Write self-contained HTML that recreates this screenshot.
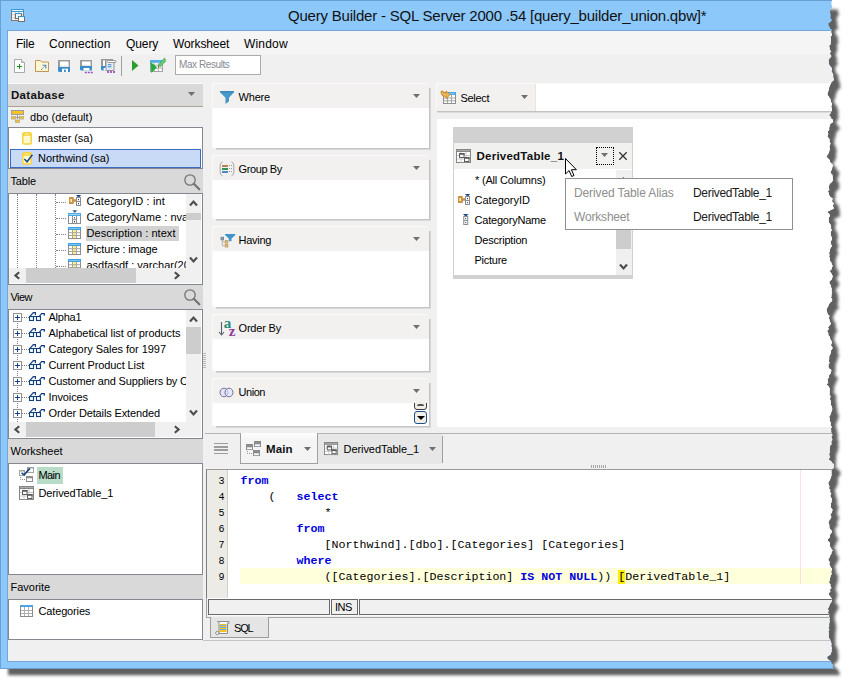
<!DOCTYPE html>
<html lang="en">
<head>
<meta charset="utf-8">
<title>Query Builder - SQL Server 2000 .54 [query_builder_union.qbw]*</title>
<style>
*{box-sizing:border-box;margin:0;padding:0}
html,body{width:849px;height:684px;background:#fff;overflow:hidden}
body{position:relative;font-family:"Liberation Sans",sans-serif;font-size:11px;color:#000;line-height:1}
.abs,.abs *{position:absolute}
#shadow{position:absolute;left:0;top:0;width:849px;height:684px;z-index:0}
#win{position:absolute;left:0;top:0;width:849px;height:684px;z-index:1;clip-path:polygon(0px 0px,832px 0px,831.6px 2.0px,831.2px 4.0px,832.3px 6.0px,832px 8px,830.1px 10.0px,830px 12px,830.6px 14.0px,830.7px 16.0px,830.5px 18.0px,832px 20px,830.8px 21.7px,828.6px 23.3px,828.5px 25px,829.5px 26.7px,829.9px 28.3px,832px 30px,830.9px 31.7px,831.5px 33.3px,832.2px 35.0px,830.5px 36.7px,830.6px 38.3px,831px 40px,830.6px 42.0px,830.7px 44.0px,829px 46px,829.6px 47.8px,829.6px 49.6px,831.2px 51.4px,829.6px 53.2px,831px 55px,831.3px 56.8px,829.5px 58.5px,828.7px 60.2px,829px 62px,828.9px 64.0px,830.1px 66.0px,831.9px 68.0px,832px 70px,831.6px 71.7px,832.8px 73.3px,833.3px 75.0px,833.1px 76.7px,833.8px 78.3px,834px 80px,831.8px 82.0px,830.5px 84.0px,829.6px 86.0px,829px 88px,829.0px 89.8px,828.1px 91.5px,827.5px 93.2px,827.5px 95px,828.9px 96.7px,829.7px 98.3px,831px 100px,830.7px 101.7px,832.0px 103.3px,831.9px 105.0px,831.1px 106.7px,832.0px 108.3px,832px 110px,831.1px 111.7px,830.8px 113.3px,829px 115px,830.8px 116.7px,831.2px 118.3px,833px 120px,833.1px 122.0px,830.2px 124.0px,829.8px 126.0px,829px 128px,829.3px 129.8px,827.7px 131.5px,828.2px 133.2px,828px 135px,827.3px 136.7px,829.0px 138.3px,829.6px 140.0px,829.5px 141.7px,830.5px 143.3px,830px 145px,829.3px 146.8px,829.9px 148.5px,829.5px 150.2px,829px 152px,828.3px 153.7px,827.2px 155.3px,826.5px 157px,828.4px 158.7px,829.8px 160.3px,830px 162px,833px 165px,832.3px 167.0px,832.0px 169.0px,831px 171px,830.5px 172.9px,832.3px 174.8px,832.6px 176.6px,832.7px 178.5px,832.9px 180.4px,831.6px 182.2px,829.5px 184.1px,829px 186px,828.7px 187.8px,829.4px 189.6px,827.9px 191.4px,828.9px 193.2px,829px 195px,830.1px 196.8px,832.7px 198.5px,832.1px 200.2px,832.2px 201.8px,833.9px 203.5px,832.8px 205.2px,833.2px 206.8px,834px 208.5px,830.3px 210.2px,827px 212px,829.3px 214.0px,830px 216px,828.6px 217.7px,828.9px 219.3px,828.5px 221px,829.2px 222.9px,830.6px 224.8px,831.1px 226.6px,831px 228.5px,831.8px 230.3px,830.5px 232.1px,830.8px 233.9px,830.7px 235.6px,831.8px 237.4px,832.0px 239.2px,831px 241px,830.6px 242.7px,831.0px 244.3px,832px 246px,830.7px 247.8px,829.9px 249.5px,829.7px 251.2px,829px 253px,829.5px 254.8px,829.1px 256.7px,830px 258.5px,829.6px 260.4px,831.2px 262.2px,831.7px 264.1px,832.7px 266px,831.8px 267.7px,831.6px 269.3px,829.5px 271px,831.0px 272.7px,831.7px 274.3px,832.7px 276px,832.2px 277.9px,831.5px 279.8px,829.3px 281.6px,829.5px 283.5px,830.9px 285.4px,831.1px 287.2px,831.8px 289.1px,831.5px 291px,832.2px 292.7px,831.4px 294.3px,831.5px 296.0px,831.0px 297.7px,832.2px 299.3px,832px 301px,829.9px 302.8px,828.8px 304.6px,828.1px 306.4px,826.9px 308.2px,826.5px 310px,827.1px 312.0px,827.5px 314.0px,829.5px 316px,828.8px 317.9px,829.5px 319.8px,829.7px 321.6px,831px 323.5px,829.7px 325.4px,828.0px 327.2px,828.8px 329.1px,827px 331px,828.3px 333.0px,828.2px 335.0px,830px 337px,830.1px 338.7px,831.0px 340.3px,832px 342px,831.5px 343.7px,830.8px 345.3px,832.3px 347.0px,832.4px 348.7px,831.1px 350.3px,831px 352px,830.6px 353.8px,829.4px 355.6px,829.1px 357.4px,829.2px 359.1px,828.7px 360.9px,829.6px 362.7px,828.5px 364.5px,828.4px 366.4px,828.7px 368.2px,831.4px 370.1px,831px 372px,830.4px 373.8px,828.9px 375.6px,829.2px 377.4px,827.4px 379.1px,827.8px 380.9px,828.2px 382.7px,826.5px 384.5px,828.5px 386.2px,829.3px 387.8px,830px 389.5px,829.5px 391.2px,829.7px 392.8px,829.3px 394.5px,830.6px 396.2px,830.1px 397.8px,830px 399.5px,831.1px 401.4px,830.6px 403.2px,830.9px 405.1px,832px 407px,832.2px 408.7px,832.1px 410.3px,831.3px 412.0px,830.7px 413.7px,830.2px 415.3px,829px 417px,830.0px 418.7px,829.4px 420.3px,830.5px 422.0px,830.7px 423.7px,830.5px 425.3px,832px 427px,830.9px 428.7px,831.3px 430.3px,831.1px 432.0px,832.0px 433.7px,832.4px 435.3px,831.2px 437.0px,832.2px 438.7px,832.2px 440.3px,831px 442px,831.8px 443.7px,830.4px 445.3px,829.9px 447.0px,829.7px 448.7px,829.5px 450.3px,830px 452px,829.0px 453.9px,829.5px 455.8px,829.8px 457.6px,828.5px 459.5px,831.1px 461.2px,832.1px 462.8px,834px 464.5px,833.7px 466.4px,833.4px 468.2px,831.2px 470.1px,831.5px 472px,831.4px 473.8px,831.5px 475.6px,830.8px 477.4px,830.3px 479.1px,829.3px 480.9px,828.2px 482.7px,828.5px 484.5px,829.5px 486.4px,828.9px 488.2px,830.3px 490.1px,830px 492px,831.3px 493.7px,830.3px 495.3px,830.5px 497.0px,832.0px 498.7px,831.7px 500.3px,831.5px 502px,830.8px 503.8px,830.7px 505.7px,830.7px 507.5px,832.4px 509.3px,832.2px 511.2px,831.5px 513px,830.2px 514.7px,831.2px 516.3px,831.1px 518.0px,829.8px 519.7px,828.7px 521.3px,828.5px 523px,829.4px 524.9px,829.2px 526.8px,829.7px 528.6px,831.5px 530.5px,831.9px 532.2px,830.6px 533.8px,829.7px 535.5px,829.9px 537.2px,828.2px 538.8px,827.7px 540.5px,829.4px 542.2px,830.1px 543.8px,829.6px 545.5px,830.5px 547.2px,831.4px 548.8px,832.7px 550.5px,831.4px 552.2px,831.5px 553.8px,830.1px 555.5px,829.7px 557.2px,828.4px 558.8px,828.5px 560.5px,829.9px 562.2px,829.2px 563.8px,829.9px 565.5px,830.7px 567.2px,831.9px 568.8px,831.5px 570.5px,831.0px 572.2px,831.8px 573.8px,830.5px 575.5px,830.2px 577.2px,829.9px 578.8px,829.5px 580.5px,828.9px 582.4px,830.4px 584.2px,830.3px 586.1px,831.5px 588px,829.6px 589.7px,830.5px 591.3px,829px 593px,829.0px 594.9px,830.4px 596.8px,831.7px 598.6px,832px 600.5px,831.3px 602.2px,829.9px 603.9px,829.5px 605.6px,828.7px 607.3px,827.7px 609px,828.8px 610.8px,827.8px 612.6px,829.2px 614.4px,829.0px 616.2px,830px 618px,829.3px 619.7px,830.1px 621.3px,829.3px 623.0px,829.1px 624.7px,829.3px 626.3px,828.5px 628px,829.5px 629.7px,828.5px 631.3px,829.0px 633.0px,828.8px 634.7px,828.9px 636.3px,829px 638px,830.3px 639.7px,830.6px 641.3px,831.5px 643px,831.5px 644.7px,831.3px 646.3px,832.2px 648.0px,831.6px 649.7px,831.9px 651.3px,831px 653px,830.6px 654.7px,827.8px 656.3px,827px 658px,828.6px 659.7px,831.0px 661.3px,831.5px 663px,833.2px 665.0px,832.7px 667.0px,834.5px 669px,0px 669px)}
#win div,#win span,#win svg{position:absolute}
.t{white-space:pre;line-height:14px;height:14px}
.hdr{background:#d9d9d9;left:8px;width:195px}
.box{background:#fff;border:1px solid #828790;left:8px;width:195px}
.card{background:#fff;border-radius:3px 3px 0 0;box-shadow:-1px -1px 0 #fafafa}
.card::before{content:"";position:absolute;left:100%;top:4px;width:2px;bottom:-2px;background:linear-gradient(90deg,#c4c4c4 50%,#d8d8d8 50%)}
.card::after{content:"";position:absolute;left:3px;right:-1px;top:100%;height:2px;background:linear-gradient(#c4c4c4 50%,#d8d8d8 50%)}
.card .ch{left:0;top:0;right:0;height:24px;background:#f2f1ef;border-radius:3px 3px 0 0}
.tri{width:7px;height:4px;background:#6f6f6f;clip-path:polygon(0 0,100% 0,50% 100%)}
.code{font-family:"Liberation Mono",monospace;font-size:11.67px;white-space:pre;line-height:16px;height:16px;color:#000}
.kw{position:static!important;color:#0000e0;font-weight:bold}
.ln{font-family:"Liberation Mono",monospace;font-size:10px;line-height:16px;height:16px;left:207px;width:17.5px;text-align:right;color:#000;margin-top:1px}
</style>
</head>
<body>
<svg id="shadow" width="849" height="684" viewBox="0 0 849 684">
<defs><g id="keyic"><path d="M8 1h5.200l-2.600 2.700z" fill="#1c4587"/><rect x="8.500" y="3.500" width="4" height="8" fill="#fff" stroke="#8a8a8a"/><path d="M8.500 7.500h4" stroke="#8a8a8a"/><rect x="10" y="5" width="1" height="1.200" fill="#1c4587"/><rect x="10" y="9" width="1" height="1.200" fill="#1c4587"/><path d="M1.500 3h4.200v2.200h2.300v2.600h-2.300v2.200h-4.200q-.5 0-.5-.5v-6q0-.5.500-.5z" fill="#c8923f"/><rect x="2.400" y="5" width="1.500" height="3" fill="#fff3d6"/></g><g id="glasses" fill="none" stroke="#123e7c" stroke-width="1.1"><rect x="0.5" y="4.5" width="4" height="4" fill="#f4fbff"/><rect x="7.500" y="4.500" width="4" height="4" fill="#f4fbff"/><path d="M4.500 4.500h3"/><path d="M1 4.300l3.300-3.600h2.100v2.200" stroke-width="1.200"/><path d="M10.300 4.300l2.200-2.700h2.800v2.200" stroke-width="1.200"/></g>
<g id="mainic"><rect x="0.500" y="3.500" width="5" height="5" fill="#fff" stroke="#a2a2a2"/><rect x="0" y="3" width="6" height="1.500" fill="#a2a2a2"/><rect x="8.500" y="0.500" width="6" height="5" fill="#fff" stroke="#a2a2a2"/><rect x="8" y="0" width="7" height="1.500" fill="#a2a2a2"/><path d="M2.600 5.800l2.600 2.100 5.600-6.500" fill="none" stroke="#1c4587" stroke-width="1.700"/><path d="M1.500 10v2.500h4.500" fill="none" stroke="#8e8e8e" stroke-dasharray="1 1"/><rect x="7.500" y="9.500" width="6" height="5" fill="#fff" stroke="#8e8e8e"/><rect x="7" y="9" width="7" height="2.300" fill="#8e8e8e"/></g>
<g id="dtic"><rect x="0.500" y="0.500" width="14" height="13" fill="#fff" stroke="#858585"/><rect x="0" y="0" width="15" height="3" fill="#858585"/><path d="M1 1.500h13" stroke="#b4b4b4" stroke-width="0.800"/><path d="M1 6.500h13M1 10h13M5 3v10.500M10 3v10.500" stroke="#c9c9c9" fill="none"/><rect x="3.500" y="4.500" width="4.500" height="4" fill="#fff" stroke="#5c5c5c"/><rect x="3" y="4" width="5.500" height="1.800" fill="#5c5c5c"/><rect x="8.500" y="8.500" width="4.500" height="4" fill="#fff" stroke="#5c5c5c"/><rect x="8" y="8" width="5.500" height="1.800" fill="#5c5c5c"/></g><g id="colic"><rect x="0.500" y="1.500" width="12" height="10" fill="#fff" stroke="#8d8d8d"/><rect x="0" y="0" width="13" height="3" fill="#3f9fdc"/><path d="M1 1.500h11" stroke="#86cbf3" stroke-width="0.900"/><rect x="5" y="3" width="3" height="8" fill="#ffee82"/><path d="M1 5.700h11M1 8.500h11M4.500 3v8M8.500 3v8" stroke="#a6a6a6" fill="none"/></g><filter id="bl" x="-5%" y="-5%" width="110%" height="110%"><feGaussianBlur stdDeviation="1.6"/></filter></defs>
<polygon points="8,8 838.1,9.5 837.7,11.5 838.8,13.5 838.5,15.5 836.6,17.5 836.5,19.5 837.1,21.5 837.2,23.5 837.0,25.5 838.5,27.5 837.3,29.2 835.1,30.8 835.0,32.5 836.0,34.2 836.4,35.8 838.5,37.5 837.4,39.2 838.0,40.8 838.7,42.5 837.0,44.2 837.1,45.8 837.5,47.5 837.1,49.5 837.2,51.5 835.5,53.5 836.1,55.3 836.1,57.1 837.7,58.9 836.1,60.7 837.5,62.5 837.8,64.3 836.0,66.0 835.2,67.7 835.5,69.5 835.4,71.5 836.6,73.5 838.4,75.5 838.5,77.5 838.1,79.2 839.3,80.8 839.8,82.5 839.6,84.2 840.3,85.8 840.5,87.5 838.3,89.5 837.0,91.5 836.1,93.5 835.5,95.5 835.5,97.3 834.6,99.0 834.0,100.7 834.0,102.5 835.4,104.2 836.2,105.8 837.5,107.5 837.2,109.2 838.5,110.8 838.4,112.5 837.6,114.2 838.5,115.8 838.5,117.5 837.6,119.2 837.3,120.8 835.5,122.5 837.3,124.2 837.7,125.8 839.5,127.5 839.6,129.5 836.7,131.5 836.3,133.5 835.5,135.5 835.8,137.3 834.2,139.0 834.7,140.7 834.5,142.5 833.8,144.2 835.5,145.8 836.1,147.5 836.0,149.2 837.0,150.8 836.5,152.5 835.8,154.3 836.4,156.0 836.0,157.7 835.5,159.5 834.8,161.2 833.7,162.8 833.0,164.5 834.9,166.2 836.3,167.8 836.5,169.5 839.5,172.5 838.8,174.5 838.5,176.5 837.5,178.5 837.0,180.4 838.8,182.3 839.1,184.1 839.2,186.0 839.4,187.9 838.1,189.7 836.0,191.6 835.5,193.5 835.2,195.3 835.9,197.1 834.4,198.9 835.4,200.7 835.5,202.5 836.6,204.3 839.2,206.0 838.6,207.7 838.7,209.3 840.4,211.0 839.3,212.7 839.7,214.3 840.5,216.0 836.8,217.7 833.5,219.5 835.8,221.5 836.5,223.5 835.1,225.2 835.4,226.8 835.0,228.5 835.7,230.4 837.1,232.3 837.6,234.1 837.5,236.0 838.3,237.8 837.0,239.6 837.3,241.4 837.2,243.1 838.3,244.9 838.5,246.7 837.5,248.5 837.1,250.2 837.5,251.8 838.5,253.5 837.2,255.3 836.4,257.0 836.2,258.7 835.5,260.5 836.0,262.3 835.6,264.2 836.5,266.0 836.1,267.9 837.7,269.7 838.2,271.6 839.2,273.5 838.3,275.2 838.1,276.8 836.0,278.5 837.5,280.2 838.2,281.8 839.2,283.5 838.7,285.4 838.0,287.3 835.8,289.1 836.0,291.0 837.4,292.9 837.6,294.7 838.3,296.6 838.0,298.5 838.7,300.2 837.9,301.8 838.0,303.5 837.5,305.2 838.7,306.8 838.5,308.5 836.4,310.3 835.3,312.1 834.6,313.9 833.4,315.7 833.0,317.5 833.6,319.5 834.0,321.5 836.0,323.5 835.3,325.4 836.0,327.3 836.2,329.1 837.5,331.0 836.2,332.9 834.5,334.7 835.3,336.6 833.5,338.5 834.8,340.5 834.7,342.5 836.5,344.5 836.6,346.2 837.5,347.8 838.5,349.5 838.0,351.2 837.3,352.8 838.8,354.5 838.9,356.2 837.6,357.8 837.5,359.5 837.1,361.3 835.9,363.1 835.6,364.9 835.7,366.6 835.2,368.4 836.1,370.2 835.0,372.0 834.9,373.9 835.2,375.7 837.9,377.6 837.5,379.5 836.9,381.3 835.4,383.1 835.7,384.9 833.9,386.6 834.3,388.4 834.7,390.2 833.0,392.0 835.0,393.7 835.8,395.3 836.5,397.0 836.0,398.7 836.2,400.3 835.8,402.0 837.1,403.7 836.6,405.3 836.5,407.0 837.6,408.9 837.1,410.7 837.4,412.6 838.5,414.5 838.7,416.2 838.6,417.8 837.8,419.5 837.2,421.2 836.7,422.8 835.5,424.5 836.5,426.2 835.9,427.8 837.0,429.5 837.2,431.2 837.0,432.8 838.5,434.5 837.4,436.2 837.8,437.8 837.6,439.5 838.5,441.2 838.9,442.8 837.7,444.5 838.7,446.2 838.7,447.8 837.5,449.5 838.3,451.2 836.9,452.8 836.4,454.5 836.2,456.2 836.0,457.8 836.5,459.5 835.5,461.4 836.0,463.3 836.3,465.1 835.0,467.0 837.6,468.7 838.6,470.3 840.5,472.0 840.2,473.9 839.9,475.7 837.7,477.6 838.0,479.5 837.9,481.3 838.0,483.1 837.3,484.9 836.8,486.6 835.8,488.4 834.7,490.2 835.0,492.0 836.0,493.9 835.4,495.7 836.8,497.6 836.5,499.5 837.8,501.2 836.8,502.8 837.0,504.5 838.5,506.2 838.2,507.8 838.0,509.5 837.3,511.3 837.2,513.2 837.2,515.0 838.9,516.8 838.7,518.7 838.0,520.5 836.7,522.2 837.7,523.8 837.6,525.5 836.3,527.2 835.2,528.8 835.0,530.5 835.9,532.4 835.7,534.3 836.2,536.1 838.0,538.0 838.4,539.7 837.1,541.3 836.2,543.0 836.4,544.7 834.7,546.3 834.2,548.0 835.9,549.7 836.6,551.3 836.1,553.0 837.0,554.7 837.9,556.3 839.2,558.0 837.9,559.7 838.0,561.3 836.6,563.0 836.2,564.7 834.9,566.3 835.0,568.0 836.4,569.7 835.7,571.3 836.4,573.0 837.2,574.7 838.4,576.3 838.0,578.0 837.5,579.7 838.3,581.3 837.0,583.0 836.7,584.7 836.4,586.3 836.0,588.0 835.4,589.9 836.9,591.7 836.8,593.6 838.0,595.5 836.1,597.2 837.0,598.8 835.5,600.5 835.5,602.4 836.9,604.3 838.2,606.1 838.5,608.0 837.8,609.7 836.4,611.4 836.0,613.1 835.2,614.8 834.2,616.5 835.3,618.3 834.3,620.1 835.7,621.9 835.5,623.7 836.5,625.5 835.8,627.2 836.6,628.8 835.8,630.5 835.6,632.2 835.8,633.8 835.0,635.5 836.0,637.2 835.0,638.8 835.5,640.5 835.3,642.2 835.4,643.8 835.5,645.5 836.8,647.2 837.1,648.8 838.0,650.5 838.0,652.2 837.8,653.8 838.7,655.5 838.1,657.2 838.4,658.8 837.5,660.5 837.1,662.2 834.3,663.8 833.5,665.5 835.1,667.2 837.5,668.8 838.0,670.5 839.7,672.5 839.2,674.5 841.0,675.3 8,675.3" fill="#606060" filter="url(#bl)"/>
</svg>
<div id="win">
<!-- window frame -->
<div style="left:0;top:0;width:849px;height:669px;border:1px solid #6c9fd3;border-right:0;background:#8cc8fa"></div>
<div style="left:7px;top:30px;width:842px;height:632px;border:1px solid #74a6da;background:#f0f0f0"></div>
<svg style="left:10px;top:8px" width="16" height="16" viewBox="0 0 16 16">
<rect x="1.500" y="1.500" width="12" height="11" fill="#fff" stroke="#86786f"/>
<path d="M2 6.800h11M2 9.700h11M5 4v8M9 4v8" stroke="#c9c4c0" fill="none"/>
<rect x="1" y="1" width="13" height="3" fill="#3a98d1"/><path d="M2 2.500h11" stroke="#fff" stroke-width="0.900"/>
<rect x="5.500" y="5.500" width="6" height="5" fill="#f4faff" stroke="#776c66"/><path d="M5 5.500h7" stroke="#3a98d1" stroke-width="1.200"/>
<rect x="8.500" y="8.500" width="6" height="5" fill="#fff" stroke="#776c66"/><path d="M8 8.500h7" stroke="#3a98d1" stroke-width="1.200"/>
</svg>
<div class="t" style="left:288px;top:7px;font-size:15px;line-height:18px;height:18px;color:#111;letter-spacing:-0.21px" id="title">Query Builder - SQL Server 2000 .54 [query_builder_union.qbw]*</div>
<!-- menu -->
<div style="left:8px;top:31px;width:841px;height:23px;background:#f5f5f5"></div>
<div class="t" style="left:16px;top:37px;font-size:12px;line-height:15px;height:15px;letter-spacing:-0.26px" id="m1">File</div>
<div class="t" style="left:49px;top:37px;font-size:12px;line-height:15px;height:15px;letter-spacing:0.08px" id="m2">Connection</div>
<div class="t" style="left:126px;top:37px;font-size:12px;line-height:15px;height:15px;letter-spacing:-0.1px" id="m3">Query</div>
<div class="t" style="left:173px;top:37px;font-size:12px;line-height:15px;height:15px;letter-spacing:-0.1px" id="m4">Worksheet</div>
<div class="t" style="left:244px;top:37px;font-size:12px;line-height:15px;height:15px;letter-spacing:0.19px" id="m5">Window</div>
<!-- toolbar -->
<svg style="left:14px;top:59px" width="11" height="14" viewBox="0 0 11 14">
<path d="M0.500 0.500h7l3 3v10h-10z" fill="#fff" stroke="#a9a9a9"/>
<path d="M7.500 0.500v3h3" fill="#e9e9e9" stroke="#a9a9a9"/>
<path d="M3 7.500h5M5.500 5v5" stroke="#1f8f23" stroke-width="1.100" fill="none"/>
</svg>
<svg style="left:35px;top:60px" width="14" height="12" viewBox="0 0 14 12">
<path d="M0.500 0.500h5l1.500 1.500h6.500v9.500h-13z" fill="#fff6d1" stroke="#c3965a" stroke-width="1"/>
<path d="M6 10l4.300-4.300" stroke="#3c8bcb" stroke-width="1" stroke-dasharray="1.300 0.500" fill="none"/><path d="M7.500 5.200h3.300v3.300" stroke="#3c8bcb" stroke-width="1.100" fill="none"/>
</svg>
<svg style="left:58px;top:60px" width="12" height="12" viewBox="0 0 12 12">
<rect x="0" y="0" width="12" height="8" fill="#9c9c9c"/>
<rect x="2" y="1.500" width="8.500" height="5.500" fill="#fff"/><rect x="2" y="5.500" width="8.500" height="1.500" fill="#e4e4e4"/>
<path d="M0 7h12v5h-11l-1-1z" fill="#3a8cca"/>
<rect x="4" y="8.700" width="6" height="3.300" fill="#fff"/><rect x="6" y="9.700" width="1.800" height="2.300" fill="#3a8cca"/>
</svg>
<svg style="left:80px;top:60px" width="14" height="14" viewBox="0 0 14 14">
<rect x="0" y="0" width="12" height="7" fill="#9c9c9c"/>
<rect x="2" y="1.500" width="8.500" height="4.500" fill="#fff"/><rect x="2" y="4.800" width="8.500" height="1.200" fill="#e4e4e4"/>
<path d="M0 6h12v4.500h-11l-1-1z" fill="#3a8cca"/>
<rect x="3.500" y="8" width="6" height="2.500" fill="#fff"/>
<path d="M4.800 12.500h2M7.800 12.500h2M10.800 12.500h2" stroke="#9b4fb5" stroke-width="1.700"/>
</svg>
<svg style="left:100px;top:58px" width="17" height="16" viewBox="0 0 17 16">
<rect x="1" y="1" width="12" height="1.600" fill="#9a9a9a"/><rect x="1" y="1" width="2" height="7.500" fill="#9a9a9a"/><rect x="3" y="2.600" width="2" height="5" fill="#fff"/><rect x="5" y="1" width="1.300" height="8" fill="#9a9a9a"/>
<path d="M1 8h4.500v4.500h-3.500l-1-1z" fill="#2f8fd2"/><rect x="3.600" y="10" width="2.400" height="2.500" fill="#fff"/>
<path d="M6 3.500v9h8v-8" fill="#e6edf6" stroke="#8c8c8c" stroke-width="0.900"/>
<rect x="7.500" y="2.500" width="8.500" height="2" rx="1" fill="#fff" stroke="#8c8c8c" stroke-width="0.900"/>
<path d="M7.800 6.800h3.700M7.800 8.800h3.700" stroke="#3a8cca" stroke-width="1.100"/><path d="M7.800 10.800h3.700" stroke="#cfd8e2" stroke-width="0.900"/>
<path d="M7 14h2M10 14h2M13 14h2" stroke="#a45fc3" stroke-width="1.900"/>
</svg>
<div style="left:121px;top:56px;width:1px;height:20px;background:#a0a0a0"></div>
<svg style="left:131px;top:59px" width="9" height="13" viewBox="0 0 9 13"><path d="M1 1l6.500 5.500-6.500 5.500z" fill="#2d9d30"/></svg>
<svg style="left:149px;top:57px" width="18" height="17" viewBox="0 0 18 17">
<rect x="1.500" y="3.500" width="12" height="11" fill="#fff" stroke="#a3a3a3"/>
<rect x="1" y="3" width="13" height="2.800" fill="#55aeea"/>
<path d="M2 8.200h11M2 11.200h11M5.200 6v8M9.300 6v8" stroke="#b3b3b3" fill="none"/>
<path d="M1.700 5l6.300 5.300-5.700 5.700z" fill="#1fae3c"/>
<path d="M9.200 8.200l6-7 1.200 0.800v2.500l-5.100 5.500z" fill="#68c876" stroke="#1f9a3a" stroke-width="0.800" stroke-dasharray="1 0.600"/>
<path d="M9.200 8.200l2.100 1.800-2 .3z" fill="#f2a832"/><rect x="9" y="9.300" width="1" height="1" fill="#333"/>
</svg>
<div style="left:175px;top:55px;width:86px;height:20px;background:#fff;border:1px solid #ababab"></div>
<div class="t" style="left:179px;top:58px;font-size:10px;color:#8a8a93;letter-spacing:-0.42px" id="maxr">Max Results</div>

<!-- LEFT PANEL -->
<div style="left:8px;top:83px;width:195px;height:1px;background:#fafafa"></div>
<div class="hdr" style="top:84px;height:22px"></div>
<div style="left:8px;top:106px;width:195px;height:1px;background:#a9a494"></div>
<div class="t" style="left:11px;top:88px;font-weight:bold;font-size:11.500px;color:#111;letter-spacing:0.32px" id="dbh">Database</div>
<div class="tri" style="left:188px;top:92px"></div>
<!-- dbo row -->
<svg style="left:10px;top:109px" width="15" height="15" viewBox="0 0 15 15">
<rect x="1.500" y="1.500" width="12" height="4" fill="#f9c324" stroke="#9d9d9d"/>
<path d="M7.500 6v4M3.500 8.500h8" stroke="#9d9d9d" fill="none"/>
<rect x="1.500" y="7.500" width="4" height="2.500" fill="#f9c324" stroke="#b7ac8c" stroke-width="0.800"/>
<rect x="9.500" y="7.500" width="4" height="2.500" fill="#f9c324" stroke="#b7ac8c" stroke-width="0.800"/>
<rect x="5.500" y="11" width="4" height="2.500" fill="#f9c324" stroke="#b7ac8c" stroke-width="0.800"/>
</svg>
<div class="t" style="left:30px;top:110px;letter-spacing:0.05px" id="dbo">dbo (default)</div>
<!-- db list -->
<div class="box" style="top:127px;height:42px"></div>
<svg style="left:22px;top:132px" width="10" height="13" viewBox="0 0 10 13">
<rect x="0.750" y="0.750" width="8.500" height="11.300" rx="1.500" fill="#fbf9cf" stroke="#f5d33d" stroke-width="1.500"/>
<rect x="1" y="1" width="8" height="2.800" fill="#f5d33d"/><path d="M2.500 2h5" stroke="#fdf3b0" stroke-width="0.900"/>
</svg>
<div class="t" style="left:38px;top:131px;letter-spacing:-0.06px" id="mas">master (sa)</div>
<div style="left:10px;top:149px;width:191px;height:19px;background:#c9daf6;border:1px solid #3a6cc6"></div>
<svg style="left:22px;top:152px" width="12" height="13" viewBox="0 0 12 13">
<rect x="0.750" y="0.750" width="8.500" height="11.300" rx="1.500" fill="#fbf9cf" stroke="#f5d33d" stroke-width="1.500"/>
<rect x="1" y="1" width="8" height="2.800" fill="#f5d33d"/><path d="M2.500 2h5" stroke="#fdf3b0" stroke-width="0.900"/>
<path d="M2.400 7l2.700 2.800 5.300-7" stroke="#1c4587" stroke-width="1.500" fill="none"/>
</svg>
<div class="t" style="left:38px;top:151px;letter-spacing:-0.0px" id="nor">Northwind (sa)</div>
<!-- Table header -->
<div class="hdr" style="top:169px;height:24px"></div>
<div class="t" style="left:10.500px;top:174px;letter-spacing:-0.16px" id="tbh">Table</div>
<svg style="left:183px;top:173px" width="18" height="18" viewBox="0 0 18 18">
<circle cx="7" cy="7" r="5.200" fill="none" stroke="#747474" stroke-width="1.300"/>
<path d="M10.800 10.800l5.500 5.500" stroke="#747474" stroke-width="2.200" stroke-linecap="round"/>
</svg>
<!-- Table tree -->
<div class="box" style="top:193px;height:92px"></div>
<div style="left:9px;top:194px;width:177px;height:74px;overflow:hidden" id="ttree">
<div style="left:8px;top:0;width:0;height:74px;border-left:1px dotted #808080"></div>
<div style="left:27px;top:0;width:0;height:74px;border-left:1px dotted #808080"></div>
<div style="left:46px;top:0;width:0;height:74px;border-left:1px dotted #808080"></div>
<div style="left:47px;top:8px;width:10px;height:0;border-top:1px dotted #808080"></div>
<div style="left:47px;top:24px;width:10px;height:0;border-top:1px dotted #808080"></div>
<div style="left:47px;top:40px;width:10px;height:0;border-top:1px dotted #808080"></div>
<div style="left:47px;top:56px;width:10px;height:0;border-top:1px dotted #808080"></div>
<div style="left:47px;top:72px;width:10px;height:0;border-top:1px dotted #808080"></div>
<!-- key icon -->
<svg style="left:59px;top:0px" width="14" height="13" viewBox="0 0 14 13"><use href="#keyic"/></svg>
<!-- col name icon -->
<svg style="left:59px;top:16px" width="14" height="15" viewBox="0 0 14 15">
<rect x="0.500" y="4.500" width="12" height="9" fill="#fff" stroke="#8d8d8d"/>
<rect x="0" y="3" width="13" height="3" fill="#4aa8e0"/><path d="M1 4.500h11" stroke="#a6dcf8" stroke-width="0.900"/>
<path d="M4 0h5.500l-2.750 3.200z" fill="#1c4587" stroke="#fff" stroke-width="0.600"/>
<path d="M4.500 6v7.500M8.500 6v7.500M4.500 9.700h4" stroke="#8d8d8d" fill="none"/>
<rect x="6" y="7.300" width="1" height="1.200" fill="#1c4587"/><rect x="6" y="11" width="1" height="1.200" fill="#1c4587"/>
</svg>
<!-- column icons -->
<svg style="left:59px;top:33px" width="14" height="13" viewBox="0 0 14 13"><use href="#colic"/></svg>
<svg style="left:59px;top:49px" width="14" height="13" viewBox="0 0 14 13"><use href="#colic"/></svg>
<svg style="left:59px;top:65px" width="14" height="13" viewBox="0 0 14 13"><use href="#colic"/></svg>
<div style="left:77px;top:32px;width:93px;height:15px;background:#d2d2d2"></div>
<div class="t" style="left:77.500px;top:0px;letter-spacing:0.13px" id="c1">CategoryID : int</div>
<div class="t" style="left:77.500px;top:16px;letter-spacing:0.05px" id="c2">CategoryName : nvarchar(15)</div>
<div class="t" style="left:77.500px;top:32px;letter-spacing:0.05px" id="c3">Description : ntext</div>
<div class="t" style="left:77.500px;top:48px;letter-spacing:-0.16px" id="c4">Picture : image</div>
<div class="t" style="left:77.500px;top:64px;letter-spacing:0.0px" id="c5">asdfasdf : varchar(20)</div>
</div>
<!-- table tree scrollbars -->
<div style="left:186px;top:194px;width:15px;height:89px;background:#f0f0f0"></div>
<div style="left:186px;top:213px;width:15px;height:7px;background:#cdcdcd"></div>
<svg style="left:189px;top:199px" width="9" height="8" viewBox="0 0 9 8"><path d="M1 6.400l3.500-3.800 3.500 3.800" stroke="#4e4e4e" stroke-width="2.200" fill="none"/></svg>
<svg style="left:189px;top:255.500px" width="9" height="8" viewBox="0 0 9 8"><path d="M1 1.600l3.500 3.800 3.500-3.800" stroke="#4e4e4e" stroke-width="2.200" fill="none"/></svg>
<div style="left:9px;top:268px;width:177px;height:15px;background:#f0f0f0"></div>
<div style="left:26px;top:268px;width:110px;height:15px;background:#cdcdcd"></div>
<svg style="left:13px;top:271px" width="8" height="9" viewBox="0 0 8 9"><path d="M6.200 1.300l-3.800 3.200 3.800 3.200" stroke="#4a4a4a" stroke-width="2.100" fill="none"/></svg>
<svg style="left:173px;top:271px" width="8" height="9" viewBox="0 0 8 9"><path d="M1.800 1.300l3.800 3.200-3.800 3.200" stroke="#4a4a4a" stroke-width="2.100" fill="none"/></svg>


<!-- View header -->
<div class="hdr" style="top:285px;height:24px"></div>
<div class="t" style="left:10.500px;top:290px;letter-spacing:-0.54px" id="vwh">View</div>
<svg style="left:183px;top:288px" width="18" height="18" viewBox="0 0 18 18">
<circle cx="7" cy="7" r="5.200" fill="none" stroke="#747474" stroke-width="1.300"/>
<path d="M10.800 10.800l5.500 5.500" stroke="#747474" stroke-width="2.200" stroke-linecap="round"/>
</svg>
<div class="box" style="top:309px;height:130px"></div>
<div style="left:9px;top:310px;width:177px;height:112px;overflow:hidden" id="vtree">
<div style="left:8px;top:8px;width:0;height:110px;border-left:1px dotted #808080"></div>
<div style="left:13px;top:7px;width:7px;height:0;border-top:1px dotted #808080"></div>
<div style="left:4px;top:3px;width:9px;height:9px;background:#fff;border:1px solid #919191"></div>
<div style="left:6px;top:7px;width:5px;height:1px;background:#1f3f86"></div>
<div style="left:8px;top:5px;width:1px;height:5px;background:#1f3f86"></div>
<svg style="left:20px;top:2px" width="17" height="10" viewBox="0 0 17 10"><use href="#glasses"/></svg>
<div class="t" style="left:39.500px;top:0px;letter-spacing:-0.23px" id="v0">Alpha1</div>
<div style="left:13px;top:23px;width:7px;height:0;border-top:1px dotted #808080"></div>
<div style="left:4px;top:19px;width:9px;height:9px;background:#fff;border:1px solid #919191"></div>
<div style="left:6px;top:23px;width:5px;height:1px;background:#1f3f86"></div>
<div style="left:8px;top:21px;width:1px;height:5px;background:#1f3f86"></div>
<svg style="left:20px;top:18px" width="17" height="10" viewBox="0 0 17 10"><use href="#glasses"/></svg>
<div class="t" style="left:39.500px;top:16px;letter-spacing:-0.07px" id="v1">Alphabetical list of products</div>
<div style="left:13px;top:39px;width:7px;height:0;border-top:1px dotted #808080"></div>
<div style="left:4px;top:35px;width:9px;height:9px;background:#fff;border:1px solid #919191"></div>
<div style="left:6px;top:39px;width:5px;height:1px;background:#1f3f86"></div>
<div style="left:8px;top:37px;width:1px;height:5px;background:#1f3f86"></div>
<svg style="left:20px;top:34px" width="17" height="10" viewBox="0 0 17 10"><use href="#glasses"/></svg>
<div class="t" style="left:39.500px;top:32px;letter-spacing:-0.05px" id="v2">Category Sales for 1997</div>
<div style="left:13px;top:55px;width:7px;height:0;border-top:1px dotted #808080"></div>
<div style="left:4px;top:51px;width:9px;height:9px;background:#fff;border:1px solid #919191"></div>
<div style="left:6px;top:55px;width:5px;height:1px;background:#1f3f86"></div>
<div style="left:8px;top:53px;width:1px;height:5px;background:#1f3f86"></div>
<svg style="left:20px;top:50px" width="17" height="10" viewBox="0 0 17 10"><use href="#glasses"/></svg>
<div class="t" style="left:39.500px;top:48px;letter-spacing:-0.1px" id="v3">Current Product List</div>
<div style="left:13px;top:71px;width:7px;height:0;border-top:1px dotted #808080"></div>
<div style="left:4px;top:67px;width:9px;height:9px;background:#fff;border:1px solid #919191"></div>
<div style="left:6px;top:71px;width:5px;height:1px;background:#1f3f86"></div>
<div style="left:8px;top:69px;width:1px;height:5px;background:#1f3f86"></div>
<svg style="left:20px;top:66px" width="17" height="10" viewBox="0 0 17 10"><use href="#glasses"/></svg>
<div class="t" style="left:39.500px;top:64px;letter-spacing:-0.16px" id="v4">Customer and Suppliers by City</div>
<div style="left:13px;top:87px;width:7px;height:0;border-top:1px dotted #808080"></div>
<div style="left:4px;top:83px;width:9px;height:9px;background:#fff;border:1px solid #919191"></div>
<div style="left:6px;top:87px;width:5px;height:1px;background:#1f3f86"></div>
<div style="left:8px;top:85px;width:1px;height:5px;background:#1f3f86"></div>
<svg style="left:20px;top:82px" width="17" height="10" viewBox="0 0 17 10"><use href="#glasses"/></svg>
<div class="t" style="left:39.500px;top:80px;letter-spacing:-0.12px" id="v5">Invoices</div>
<div style="left:13px;top:103px;width:7px;height:0;border-top:1px dotted #808080"></div>
<div style="left:4px;top:99px;width:9px;height:9px;background:#fff;border:1px solid #919191"></div>
<div style="left:6px;top:103px;width:5px;height:1px;background:#1f3f86"></div>
<div style="left:8px;top:101px;width:1px;height:5px;background:#1f3f86"></div>
<svg style="left:20px;top:98px" width="17" height="10" viewBox="0 0 17 10"><use href="#glasses"/></svg>
<div class="t" style="left:39.500px;top:96px;letter-spacing:-0.13px" id="v6">Order Details Extended</div>
<div style="left:13px;top:119px;width:7px;height:0;border-top:1px dotted #808080"></div>
<div style="left:4px;top:115px;width:9px;height:9px;background:#fff;border:1px solid #919191"></div>
<div style="left:6px;top:119px;width:5px;height:1px;background:#1f3f86"></div>
<div style="left:8px;top:117px;width:1px;height:5px;background:#1f3f86"></div>
<svg style="left:20px;top:114px" width="17" height="10" viewBox="0 0 17 10"><use href="#glasses"/></svg>
<div class="t" style="left:39.500px;top:112px;letter-spacing:-0.1px" id="v7">Order Subtotals</div>
</div>
<div style="left:186px;top:310px;width:15px;height:127px;background:#f0f0f0"></div>
<div style="left:186px;top:327px;width:15px;height:27px;background:#cdcdcd"></div>
<svg style="left:189px;top:315px" width="9" height="8" viewBox="0 0 9 8"><path d="M1 6.400l3.500-3.800 3.500 3.800" stroke="#4e4e4e" stroke-width="2.200" fill="none"/></svg>
<svg style="left:189px;top:409px" width="9" height="8" viewBox="0 0 9 8"><path d="M1 1.600l3.500 3.800 3.500-3.800" stroke="#4e4e4e" stroke-width="2.200" fill="none"/></svg>
<div style="left:9px;top:422px;width:177px;height:15px;background:#f0f0f0"></div>
<div style="left:26px;top:422px;width:129px;height:15px;background:#cdcdcd"></div>
<svg style="left:13px;top:425px" width="8" height="9" viewBox="0 0 8 9"><path d="M6.200 1.300l-3.800 3.200 3.800 3.200" stroke="#4a4a4a" stroke-width="2.100" fill="none"/></svg>
<svg style="left:173px;top:425px" width="8" height="9" viewBox="0 0 8 9"><path d="M1.800 1.300l3.800 3.200-3.800 3.200" stroke="#4a4a4a" stroke-width="2.100" fill="none"/></svg>
<!-- Worksheet -->
<div class="hdr" style="top:439px;height:24px"></div>
<div class="t" style="left:10.500px;top:444px;letter-spacing:-0.04px" id="wsh">Worksheet</div>
<div class="box" style="top:463px;height:112px"></div>
<svg style="left:19px;top:467px" width="16" height="16" viewBox="0 0 16 16"><use href="#mainic"/></svg>
<div style="left:37px;top:467px;width:26px;height:17px;background:#b9dcc8"></div>
<div class="t" style="left:38.500px;top:468px;letter-spacing:-0.59px" id="wm">Main</div>
<svg style="left:19px;top:486px" width="16" height="15" viewBox="0 0 16 15"><use href="#dtic"/></svg>
<div class="t" style="left:38.500px;top:486px;letter-spacing:-0.13px" id="wd">DerivedTable_1</div>
<!-- Favorite -->
<div class="hdr" style="top:575px;height:24px"></div>
<div class="t" style="left:10.500px;top:580px;letter-spacing:-0.01px" id="fvh">Favorite</div>
<div class="box" style="top:599px;height:41px"></div>
<svg style="left:20px;top:605px" width="14" height="12" viewBox="0 0 14 12">
<rect x="0.500" y="1.500" width="12" height="10" fill="#fff" stroke="#8a8a8a"/><rect x="0" y="0" width="13" height="2" fill="#4ea3e4"/>
<path d="M1 5.500h11M1 8.500h11M4.500 2v9M8.500 2v9" stroke="#b0b0b0" fill="none"/></svg>
<div class="t" style="left:38.500px;top:604px;letter-spacing:-0.15px" id="fc">Categories</div>

<!-- CENTER CARDS -->
<div class="card" style="left:213px;top:84px;width:216px;height:64px"><div class="ch"></div></div>
<svg style="left:220px;top:90px" width="15" height="15" viewBox="0 0 15 15"><defs><linearGradient id="fg" x1="0" y1="0" x2="0" y2="1"><stop offset="0" stop-color="#3a86ba"/><stop offset="0.25" stop-color="#4a9ccb"/><stop offset="1" stop-color="#3d8fc2"/></linearGradient></defs><path d="M0 1h14v1.200l-5 5.500v3.500l-3.500 2.800v-6.300l-5.500-5.500z" fill="url(#fg)"/></svg>
<div class="t" style="left:238.500px;top:90px;letter-spacing:-0.18px" id="cw">Where</div>
<div class="tri" style="left:413px;top:94px"></div>

<div class="card" style="left:213px;top:156px;width:216px;height:63px"><div class="ch"></div></div>
<svg style="left:219px;top:161px" width="16" height="16" viewBox="0 0 16 16">
<path d="M3.500 0.800q-2.300 1.200-2.300 3v8q0 1.800 2.300 3" fill="none" stroke="#a4a4a4" stroke-width="1"/>
<path d="M12.500 0.800q2.300 1.200 2.300 3v8q0 1.800-2.300 3" fill="none" stroke="#a4a4a4" stroke-width="1"/>
<rect x="3" y="4" width="6" height="2" fill="#b98255"/><rect x="3" y="7" width="6" height="2" fill="#2f9455"/><rect x="3" y="10" width="6" height="2" fill="#4a8cc3"/>
<path d="M10 4.500h3M10 7.500h3M10 10.500h3" stroke="#9a9a9a" stroke-dasharray="1 1" /></svg>
<div class="t" style="left:238.500px;top:162px;letter-spacing:-0.38px" id="cg">Group By</div>
<div class="tri" style="left:413px;top:166px"></div>

<div class="card" style="left:213px;top:227px;width:216px;height:80px"><div class="ch"></div></div>
<svg style="left:220px;top:233px" width="16" height="15" viewBox="0 0 16 15">
<path d="M5 1h10.300v0.900l-3.800 3.600v2.700h-2.700v-2.700l-3.800-3.600z" fill="#3f96cb"/>
<path d="M2.300 6.500v6.300h3M2.300 8.800h3" fill="none" stroke="#b4b4b4"/>
<rect x="1" y="4.200" width="2.600" height="2.600" fill="#7aa7dc" stroke="#7b7b7b" stroke-width="0.800"/>
<rect x="5.300" y="7.600" width="2.500" height="2.500" fill="#9cc4ec" stroke="#d89c42" stroke-width="0.900"/>
<rect x="5.300" y="11.500" width="2.500" height="2.500" fill="#9cc4ec" stroke="#d89c42" stroke-width="0.900"/></svg>
<div class="t" style="left:238.500px;top:233px;letter-spacing:-0.26px" id="chv">Having</div>
<div class="tri" style="left:413px;top:237px"></div>

<div class="card" style="left:213px;top:315px;width:216px;height:56px"><div class="ch"></div></div>
<svg style="left:218px;top:319px" width="22" height="20" viewBox="0 0 22 20">
<path d="M3.500 3v13M1 13l2.500 3 2.500-3" fill="none" stroke="#56606e" stroke-width="1.100"/>
<text x="5.800" y="9.200" font-family="Liberation Serif,serif" font-weight="bold" font-size="15" fill="#1f8a78">a</text>
<text x="10.800" y="17.200" font-family="Liberation Serif,serif" font-weight="bold" font-size="15" fill="#8e3a9c">z</text></svg>
<div class="t" style="left:238.500px;top:321px;letter-spacing:-0.18px" id="co">Order By</div>
<div class="tri" style="left:413px;top:325px"></div>

<div class="card" style="left:213px;top:379px;width:216px;height:47px"><div class="ch"></div></div>
<svg style="left:219px;top:387px" width="16" height="11" viewBox="0 0 16 11">
<ellipse cx="5" cy="5.500" rx="4" ry="4.300" fill="#e3e3fa" stroke="#62628e" stroke-width="0.900"/>
<ellipse cx="10" cy="5.500" rx="4" ry="4.300" fill="#e3e3fa" fill-opacity="0.600" stroke="#62628e" stroke-width="0.900"/></svg>
<div class="t" style="left:238.500px;top:385px;letter-spacing:-0.45px" id="cu">Union</div>
<div class="tri" style="left:413px;top:389px"></div>
<div style="left:414px;top:400px;width:13px;height:10px;border:1px solid #3c3c3c;border-radius:0 0 3px 3px;background:#f1eee8;clip-path:inset(3px 0 0 0)"></div>
<div style="left:417px;top:404px;width:7px;height:2px;background:#555;border-radius:3px 3px 0 0"></div>
<div style="left:414px;top:411px;width:13px;height:13px;border:1px solid #1b4f8b;border-radius:3px;background:#f1eee8"></div>
<div style="left:416.500px;top:416px;width:0;height:0;border-left:4px solid transparent;border-right:4px solid transparent;border-top:4px solid #000"></div>
<!-- splitter grip -->
<div style="left:203px;top:353px;width:3px;height:16px;background:repeating-linear-gradient(#b9b9b9 0 1px,transparent 1px 2px)"></div>

<!-- RIGHT: select + canvas -->
<div style="left:437px;top:84px;width:412px;height:27px;background:#fff;border-radius:3px 0 0 0;box-shadow:0 1px 0 #c2c2c2,0 2px 0 #dcdcdc,-1px -1px 0 #fafafa"></div>
<div style="left:437px;top:84px;width:99px;height:27px;background:#f2f1ef;border-radius:3px 0 0 0;border-right:1px solid #ebe5d2"></div>
<svg style="left:440px;top:90px" width="17" height="15" viewBox="0 0 17 15">
<rect x="3.500" y="2.500" width="12" height="11" fill="#fff" stroke="#8f8f8f"/>
<rect x="3" y="2" width="13" height="3" fill="#4aa7e2"/><path d="M8 3.500h6.500" stroke="#8fd0f5" stroke-width="0.800"/>
<path d="M4 8h11M4 10.800h11M7.500 5v8M11.500 5v8" stroke="#a4a4a4" fill="none"/>
<path d="M10 4.700l-3.800-3.700v1.800h-1.700q-1.400 0-1.400-1.600h-2q0 5.100 3.400 5.100h1.700v2.200z" fill="#eeb560" stroke="#c4850f" stroke-width="0.900" stroke-linejoin="round"/>
</svg>
<div class="t" style="left:460.500px;top:91px;letter-spacing:-0.3px" id="sel">Select</div>
<div class="tri" style="left:521px;top:95px"></div>
<div style="left:437px;top:119px;width:412px;height:308px;background:#fff"></div>
<!-- derived table box -->
<div style="left:453px;top:127px;width:180px;height:152px;background:#d1d1d1"></div>
<div style="left:454px;top:143px;width:178px;height:26px;background:#f1f1f0"></div>
<div style="left:454px;top:169px;width:178px;height:106px;background:#fff"></div>
<svg style="left:456px;top:149px" width="16" height="15" viewBox="0 0 16 15"><use href="#dtic"/></svg>
<div class="t" style="left:476.500px;top:149px;font-weight:bold;font-size:11.500px;color:#111;letter-spacing:0.24px" id="dtt">DerivedTable_1</div>
<div style="left:596px;top:147px;width:18px;height:18px;border:1px dotted #000"></div>
<div class="tri" style="left:601px;top:153px"></div>
<svg style="left:618px;top:151px" width="10" height="10" viewBox="0 0 10 10"><path d="M1.300 1.300l7.400 7.400M8.700 1.300l-7.400 7.400" stroke="#333" stroke-width="1.300"/></svg>
<div class="t" style="left:475px;top:173px;letter-spacing:-0.19px" id="r0">* (All Columns)</div>
<svg style="left:457px;top:193px" width="14" height="13" viewBox="0 0 14 13"><use href="#keyic"/></svg>
<div class="t" style="left:474.500px;top:193px;letter-spacing:-0.02px" id="r1">CategoryID</div>
<svg style="left:462.500px;top:213px" width="6" height="13" viewBox="0 0 6 13">
<path d="M0 1h5.500l-2.750 2.700z" fill="#1c4587"/><rect x="0.750" y="3.500" width="4" height="8" fill="#fff" stroke="#8a8a8a"/><path d="M0.750 7.500h4" stroke="#8a8a8a"/>
<rect x="2.250" y="5" width="1" height="1.200" fill="#1c4587"/><rect x="2.250" y="9" width="1" height="1.200" fill="#1c4587"/></svg>
<div class="t" style="left:474.500px;top:213px;letter-spacing:-0.21px" id="r2">CategoryName</div>
<div class="t" style="left:474.500px;top:233px;letter-spacing:-0.21px" id="r3">Description</div>
<div class="t" style="left:474.500px;top:253px;letter-spacing:-0.25px" id="r4">Picture</div>
<!-- box scrollbar -->
<div style="left:616px;top:170px;width:16px;height:105px;background:#f0f0f0"></div>
<div style="left:616px;top:229px;width:15px;height:20px;background:#cdcdcd"></div>
<svg style="left:619px;top:176px" width="9" height="8" viewBox="0 0 9 8"><path d="M1 6.400l3.500-3.800 3.500 3.800" stroke="#4e4e4e" stroke-width="2.200" fill="none"/></svg>
<svg style="left:619px;top:263px" width="9" height="8" viewBox="0 0 9 8"><path d="M1 1.600l3.500 3.800 3.500-3.800" stroke="#4e4e4e" stroke-width="2.200" fill="none"/></svg>
<!-- tooltip -->
<div style="left:565px;top:178px;width:228px;height:52px;background:#fff;border:1px solid #8f8f8f"></div>
<div class="t" style="left:574px;top:186px;font-size:12px;color:#8e8e8e;line-height:15px;height:15px;letter-spacing:-0.11px" id="tt1">Derived Table Alias</div>
<div class="t" style="left:693px;top:186px;font-size:12px;color:#1a1a1a;line-height:15px;height:15px;letter-spacing:-0.32px" id="tt2">DerivedTable_1</div>
<div class="t" style="left:574px;top:210px;font-size:12px;color:#8e8e8e;line-height:15px;height:15px;letter-spacing:-0.18px" id="tt3">Worksheet</div>
<div class="t" style="left:693px;top:210px;font-size:12px;color:#1a1a1a;line-height:15px;height:15px;letter-spacing:-0.32px" id="tt4">DerivedTable_1</div>
<!-- cursor -->
<svg style="left:564px;top:157px" width="14" height="21" viewBox="0 0 14 21"><path d="M1.500 1.500v15.500l3.600-3.500 2.600 6 2.300-1-2.600-5.800h5z" fill="#fff" stroke="#000" stroke-width="1" stroke-linejoin="miter"/></svg>

<!-- BOTTOM: tabs + editor -->
<div style="left:205px;top:433px;width:644px;height:1px;background:#b4b4b4"></div>
<div style="left:205px;top:434px;width:644px;height:35px;background:#f0f0f0"></div>
<div style="left:214px;top:443px;width:14px;height:11px;background:repeating-linear-gradient(#9c9c9c 0 1.4px,transparent 1.4px 3.2px)"></div>
<div style="left:318px;top:434px;width:124px;height:30px;background:#e7e7e7"></div>
<div style="left:442px;top:436px;width:1px;height:27px;background:#9e9e9e"></div>
<div style="left:240px;top:433px;width:78px;height:31px;background:linear-gradient(#fdfdfd,#f4f4f4 8px);border:1px solid #a0a0a0;border-top:0"></div>
<svg style="left:245px;top:440px" width="17" height="17" viewBox="0 0 17 17">
<rect x="1" y="4" width="7" height="6" fill="#8b8b8b"/><rect x="2" y="7.300" width="5" height="1.900" fill="#f3f9ff"/>
<rect x="9" y="1" width="7" height="6" fill="#8b8b8b"/><rect x="10" y="4.300" width="5" height="1.900" fill="#f3f9ff"/>
<rect x="8" y="10" width="7" height="6" fill="#8b8b8b"/><rect x="9" y="13.300" width="5" height="1.900" fill="#f3f9ff"/>
<rect x="2" y="11" width="1" height="1" fill="#9a9a9a"/><rect x="2" y="13" width="1" height="1" fill="#9a9a9a"/><rect x="4" y="13" width="1" height="1" fill="#9a9a9a"/><rect x="6" y="13" width="1" height="1" fill="#9a9a9a"/></svg>
<div class="t" style="left:266px;top:442px;font-weight:bold;font-size:11.500px;color:#111;letter-spacing:0.1px" id="tbm">Main</div>
<div class="tri" style="left:304px;top:447px"></div>
<svg style="left:324px;top:442px" width="15" height="14" viewBox="0 0 16 15"><use href="#dtic"/></svg>
<div class="t" style="left:343.500px;top:442px;letter-spacing:-0.06px" id="tbd">DerivedTable_1</div>
<div class="tri" style="left:429px;top:447px"></div>
<div style="left:591px;top:465px;width:15px;height:3px;background:repeating-linear-gradient(90deg,#a8a8a8 0 1px,transparent 1px 2px)"></div>
<!-- editor -->
<div style="left:206px;top:469px;width:643px;height:130px;background:#fff;border-top:1px solid #9a9a9a;border-left:1px solid #7d7d7d"></div>
<div style="left:207px;top:470px;width:21px;height:128px;background:#ecebe6;border-right:1px solid #cfcfcf"></div>
<div style="left:240px;top:568px;width:609px;height:16px;background:#ffffdc"></div>
<div style="left:800px;top:470px;width:1px;height:114px;background:#ffdede"></div>
<div class="ln" style="top:473px">3</div><div class="code" style="left:240.5px;top:473px"><span class="kw">from</span></div>
<div class="ln" style="top:489px">4</div><div class="code" style="left:268.5px;top:489px">(   <span class="kw">select</span></div>
<div class="ln" style="top:505px">5</div><div class="code" style="left:324.5px;top:505px">*</div>
<div class="ln" style="top:521px">6</div><div class="code" style="left:296.5px;top:521px"><span class="kw">from</span></div>
<div class="ln" style="top:537px">7</div><div class="code" style="left:324.5px;top:537px">[Northwind].[dbo].[Categories] [Categories]</div>
<div class="ln" style="top:553px">8</div><div class="code" style="left:296.5px;top:553px"><span class="kw">where</span></div>
<div class="ln" style="top:569px">9</div><div class="code" style="left:324.5px;top:569px">([Categories].[Description] <span class="kw">IS NOT NULL</span>)) <span style="position:static;background:#ffee00">[</span>DerivedTable_1]</div>
<!-- status -->
<div style="left:206px;top:598px;width:1px;height:20px;background:#a2a2a2"></div>
<div style="left:206px;top:617px;width:643px;height:1px;background:#a6a6a6"></div>
<div style="left:208px;top:599px;width:122px;height:16px;border:1px solid #686868;background:#f0f0f0;box-shadow:1px 1px 0 #fbfbfb"></div>
<div style="left:331px;top:599px;width:27px;height:16px;border:1px solid #686868;background:#f0f0f0;box-shadow:1px 1px 0 #fbfbfb"></div>
<div style="left:359px;top:599px;width:490px;height:16px;border:1px solid #686868;background:#f0f0f0;box-shadow:1px 1px 0 #fbfbfb"></div>
<div class="t" style="left:335px;top:600px;letter-spacing:-0.48px" id="ins">INS</div>
<div style="left:210px;top:617px;width:59px;height:21px;background:#e5e5e5;border:1px solid #9c9c9c;border-top:0"></div>
<svg style="left:215px;top:620px" width="16" height="16" viewBox="0 0 16 16">
<path d="M3.500 1.500h10.500v1.700h-1.500v10.300h-8.500v-10.300q0-1.700-1.500-1.700z" fill="#f8f8f8" stroke="#8d8d8d"/>
<rect x="4.500" y="4" width="7" height="8" fill="#f5c21d"/>
<path d="M4.500 5.500h7M4.500 7.500h7M4.500 9.500h7" stroke="#6fb1e6" stroke-width="1"/>
<circle cx="2.300" cy="13" r="1.600" fill="#fff" stroke="#8d8d8d"/>
</svg>
<div class="t" style="left:234px;top:621px;letter-spacing:-1.21px" id="sql">SQL</div>
<div style="left:203px;top:640px;width:646px;height:1px;background:#c4c4c4"></div>

</div>
</body>
</html>
